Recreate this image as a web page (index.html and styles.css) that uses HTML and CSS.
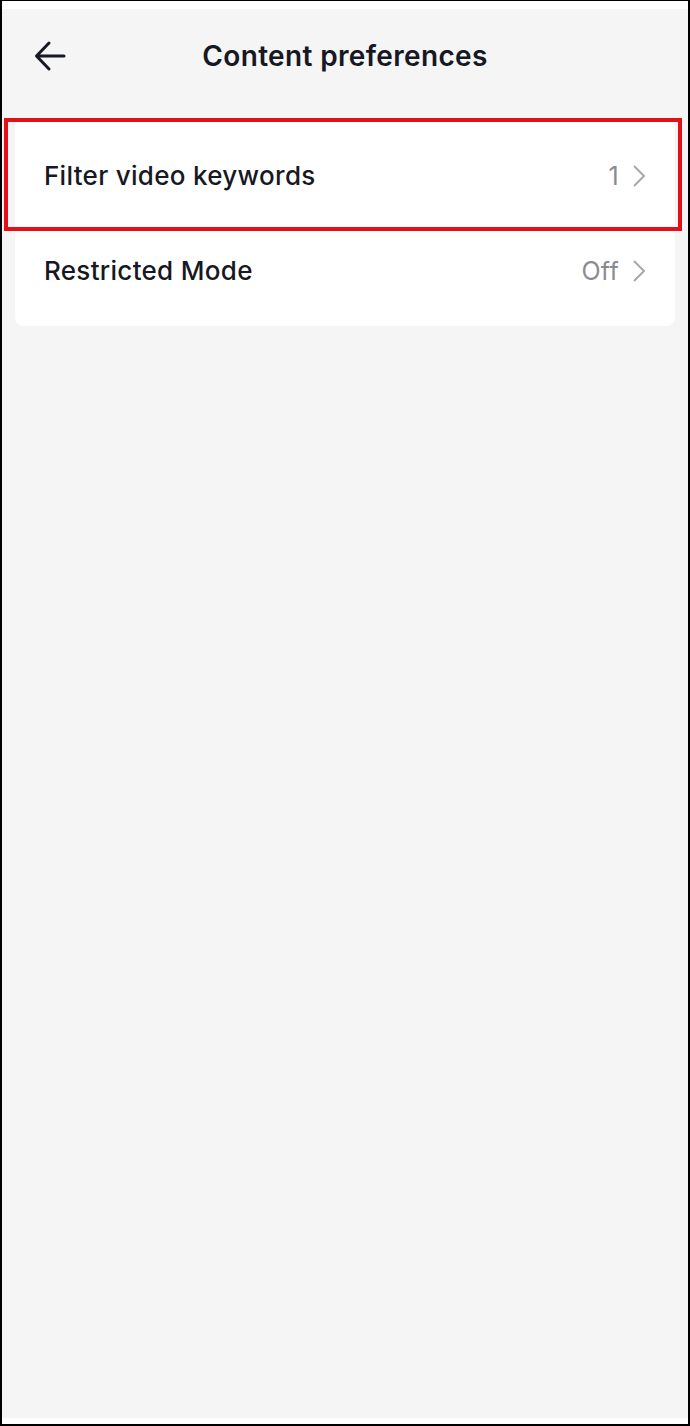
FILE: index.html
```html
<!DOCTYPE html>
<html>
<head>
	<meta charset="UTF-8">
	<title>Content preferences</title>
	<link rel="stylesheet" href="styles.css">
</head>
<body>
	<div class="frame">
		<div class="screen">
			<div class="header">
				<a href="javascript:;" class="back">
					<svg width="34" height="34" viewBox="0 0 34 34"><path d="M31 17H4M16 4L3.5 17L16 30" fill="none" stroke="#161823" stroke-width="3" stroke-linecap="round" stroke-linejoin="round"/></svg>
				</a>
				<h1 class="title">Content preferences</h1>
			</div>
			<div class="card">
				<a href="javascript:;" class="row highlighted">
					<span class="label">Filter video keywords</span>
					<span class="value">1</span>
					<svg class="chev" width="16" height="24" viewBox="0 0 16 24"><path d="M3 2L13 12L3 22" fill="none" stroke="#a8a8ab" stroke-width="2"/></svg>
					<span class="mark"></span>
				</a>
				<a href="javascript:;" class="row">
					<span class="label">Restricted Mode</span>
					<span class="value">Off</span>
					<svg class="chev" width="16" height="24" viewBox="0 0 16 24"><path d="M3 2L13 12L3 22" fill="none" stroke="#a8a8ab" stroke-width="2"/></svg>
				</a>
			</div>
		</div>
	</div>
</body>
</html>
```

FILE: styles.css
```css
*{margin: 0;padding: 0;text-decoration: none;box-sizing: border-box;}
body{font-family: Inter, "Noto Sans", sans-serif;color: #161823;}
.frame{height: 1426px;border: 2px solid #000;border-top-width: 1px;background: #fff;padding: 8px 0 6px;}
.screen{height: 1409px;background: #f5f5f5;}
.header{height: 111px;position: relative;display: flex;align-items: center;justify-content: center;padding-bottom: 18px;}
.back{position: absolute;left: 31px;top: 30px;display: flex;}
.title{font-size: 28px;font-weight: 600;letter-spacing: 0.35px;}
.card{margin: 0 13px;background: #fff;border-radius: 0 0 8px 8px;padding: 8px 0;}
.row{display: flex;align-items: center;height: 95px;padding: 0 28px 0 29px;color: #161823;position: relative;}
.label{flex: 1;font-size: 26px;font-weight: 500;letter-spacing: 0.3px;}
.value{font-size: 25px;color: #8a8b91;margin-right: 12px;letter-spacing: 0.3px;}
.chev{display: block;}
.mark{position: absolute;left: -11px;right: -7px;top: -10px;bottom: -8px;border: 4px solid #e3101a;}
```
